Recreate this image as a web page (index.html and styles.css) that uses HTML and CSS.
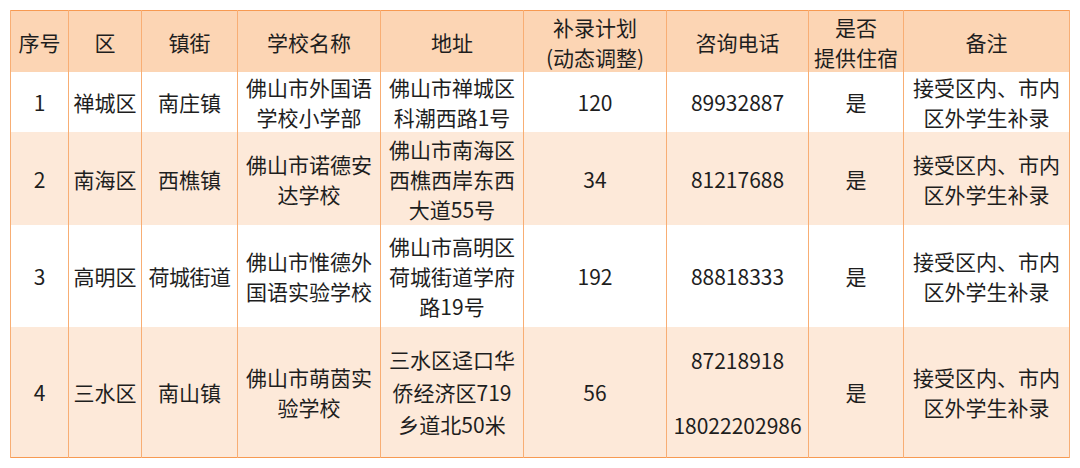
FILE: index.html
```html
<!DOCTYPE html>
<html lang="zh-CN">
<head>
<meta charset="utf-8">
<title>补录计划</title>
<link rel="stylesheet" href="styles.css">
</head>
<body>
<table class="sheet">
  <colgroup>
    <col class="c1"><col class="c2"><col class="c3"><col class="c4"><col class="c5"><col class="c6"><col class="c7"><col class="c8"><col class="c9">
  </colgroup>
  <thead>
    <tr class="head">
      <th>序号</th><th>区</th><th>镇街</th><th>学校名称</th><th>地址</th>
      <th>补录计划<br>(动态调整)</th><th>咨询电话</th><th>是否<br>提供住宿</th><th>备注</th>
    </tr>
  </thead>
  <tbody>
    <tr class="r1">
      <td>1</td><td>禅城区</td><td>南庄镇</td><td>佛山市外国语<br>学校小学部</td><td>佛山市禅城区<br>科潮西路1号</td>
      <td>120</td><td>89932887</td><td>是</td><td>接受区内、市内<br>区外学生补录</td>
    </tr>
    <tr class="r2 alt">
      <td>2</td><td>南海区</td><td>西樵镇</td><td>佛山市诺德安<br>达学校</td><td>佛山市南海区<br>西樵西岸东西<br>大道55号</td>
      <td>34</td><td>81217688</td><td>是</td><td>接受区内、市内<br>区外学生补录</td>
    </tr>
    <tr class="r3">
      <td>3</td><td>高明区</td><td class="tight">荷城街道</td><td>佛山市惟德外<br>国语实验学校</td><td>佛山市高明区<br>荷城街道学府<br>路19号</td>
      <td>192</td><td>88818333</td><td>是</td><td>接受区内、市内<br>区外学生补录</td>
    </tr>
    <tr class="r4 alt">
      <td>4</td><td>三水区</td><td>南山镇</td><td>佛山市萌茵实<br>验学校</td><td class="loose">三水区迳口华<br>侨经济区719<br>乡道北50米</td>
      <td>56</td><td class="phones"><div>87218918</div><div class="phone2">18022202986</div></td><td>是</td><td>接受区内、市内<br>区外学生补录</td>
    </tr>
  </tbody>
</table>
</body>
</html>
```

FILE: styles.css
```css
html, body {
  margin: 0;
  padding: 0;
  background: #ffffff;
}
body {
  padding: 10px 11px 0 10px;
  font-family: "Noto Sans CJK SC", "Noto Sans", sans-serif;
  color: #1e1e1e;
}
.sheet {
  border-collapse: collapse;
  table-layout: fixed;
  width: 1059px;
  border: 1.5px solid #f79a52;
  font-size: 21px;
  line-height: 30px;
}
.c1 { width: 58px; }
.c2 { width: 73px; }
.c3 { width: 96px; }
.c4 { width: 143px; }
.c5 { width: 143px; }
.c6 { width: 143px; }
.c7 { width: 142px; }
.c8 { width: 95px; }
.c9 { width: 166px; }
th, td {
  padding: 0;
  text-align: center;
  vertical-align: middle;
  font-weight: normal;
  border-left: 1.5px solid #f8ae74;
  border-right: 1.5px solid #f8ae74;
  white-space: nowrap;
  overflow: visible;
}
.head th {
  background: #fcd5b4;
  height: 61px;
}
tbody tr { background: #ffffff; }
tbody tr.alt { background: #fde9d9; }
.r1 td { height: 60px; }
.r2 td { height: 93px; }
.r3 td { height: 102px; }
.r4 td { height: 130px; }
.tight { letter-spacing: -0.5px; }
.loose { line-height: 32.5px; }
.phones div { line-height: 30px; }
.phones .phone2 { margin-top: 35px; }
```
